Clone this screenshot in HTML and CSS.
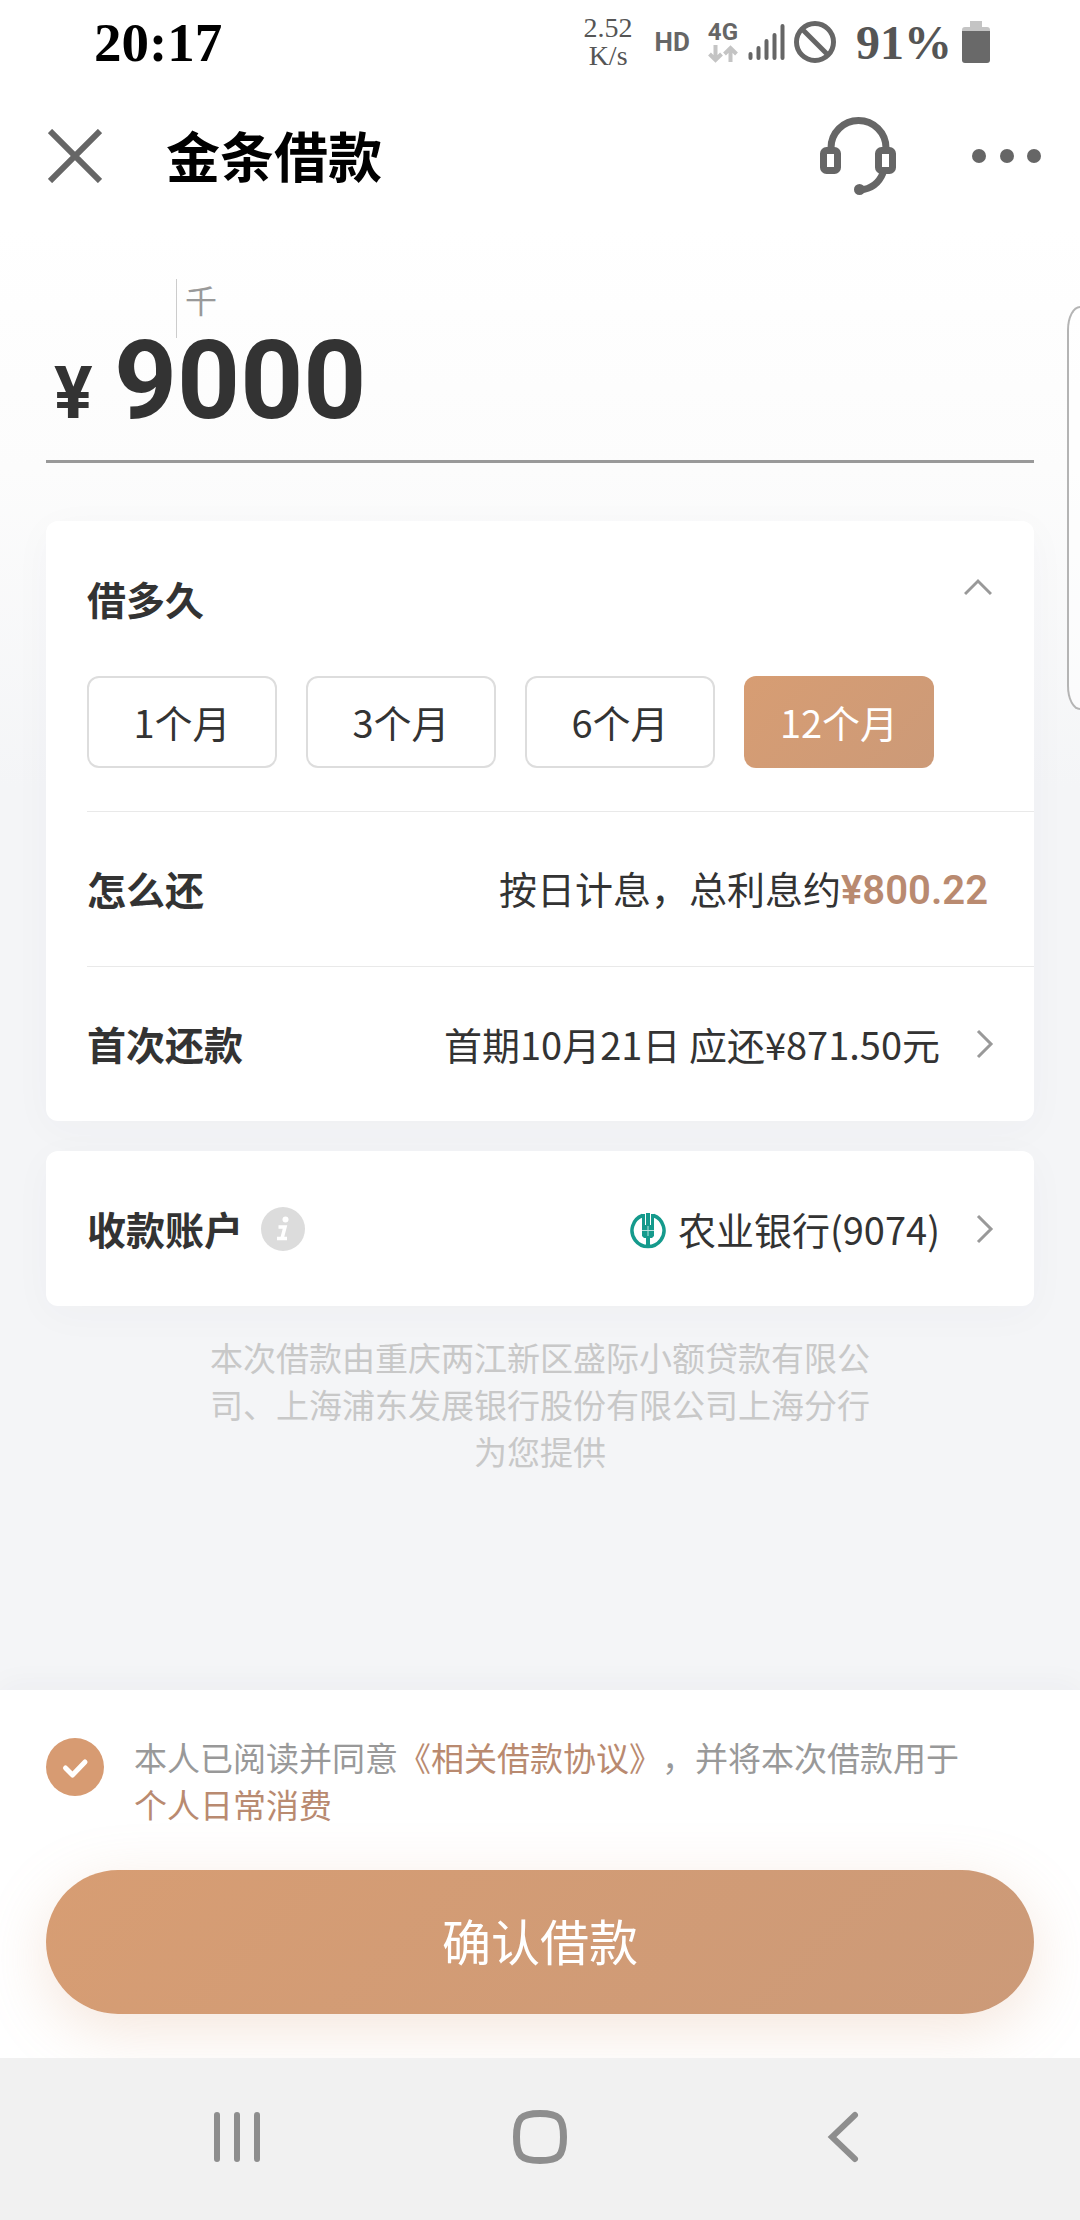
FILE: index.html
```html
<!DOCTYPE html>
<html lang="zh-CN">
<head>
<meta charset="utf-8">
<meta name="viewport" content="width=device-width, initial-scale=1">
<title>金条借款</title>
<link rel="stylesheet" href="styles.css">
</head>
<body>
<div class="status-bar">
  <time class="clock">20:17</time>
  <div class="indicators">
    <div class="speed"><span>2.52</span><span>K/s</span></div>
    <span class="hd">HD</span>
    <div class="network">
      <span>4G</span>
      <svg width="30" height="18" viewBox="0 0 30 18" fill="none" stroke="#c4c4c4" stroke-width="4"><path d="M7.500 0V15M1.500 9l6 6 6-6M22.500 17V3M16.500 9l6-6 6 6"/></svg>
    </div>
    <svg class="signal" width="38" height="38" viewBox="0 0 38 38" stroke="#666" stroke-width="4" stroke-linecap="round"><path d="M2.500 31v4M10.500 25v10M18.500 18v17M26.500 12v23M34.500 3v32"/></svg>
    <svg class="blocked" width="42" height="42" viewBox="0 0 42 42" fill="none" stroke="#666" stroke-width="5"><circle cx="21" cy="21" r="18.500"/><path d="M8 8l26 26"/></svg>
    <span class="percent">91%</span>
    <svg class="battery" width="28" height="42" viewBox="0 0 28 42"><path d="M8 0h12v6h5a3 3 0 0 1 3 3v2H0V9a3 3 0 0 1 3-3h5z" fill="#c4c4c4"/><path d="M0 10h28v29a3 3 0 0 1-3 3H3a3 3 0 0 1-3-3z" fill="#696969"/></svg>
  </div>
</div>

<header class="app-bar">
  <button class="icon-button" type="button" aria-label="关闭">
    <svg width="54" height="54" viewBox="0 0 54 54" stroke="#666" stroke-width="6"><path d="M2 2l50 50M52 2L2 52"/></svg>
  </button>
  <h1 class="title">金条借款</h1>
  <button class="icon-button" type="button" aria-label="客服">
    <svg width="76" height="78" viewBox="0 0 76 78" fill="none" stroke="#666"><path d="M11 32v-1a27 27 0 0 1 55 0v1" stroke-width="7"/><rect x="3.500" y="33.500" width="14" height="20" rx="3" stroke-width="7"/><rect x="58.500" y="33.500" width="14" height="20" rx="3" stroke-width="7"/><path d="M63 56C59 66 51 72 40 73" stroke-width="7"/><circle cx="39.500" cy="72.500" r="5.500" fill="#666" stroke="none"/></svg>
  </button>
  <button class="icon-button more" type="button" aria-label="更多">
    <svg width="70" height="14" viewBox="0 0 70 14" fill="#666"><circle cx="7" cy="7" r="7"/><circle cx="35" cy="7" r="7"/><circle cx="62" cy="7" r="7"/></svg>
  </button>
</header>

<main class="content">
  <section class="amount">
    <div class="unit">千</div>
    <div class="amount-line">
      <label class="currency" for="amount">¥</label>
      <input class="amount-input" id="amount" type="text" inputmode="numeric" value="9000">
    </div>
  </section>

  <section class="card">
    <div class="card-head">
      <h2 class="label">借多久</h2>
      <button class="icon-button collapse" type="button" aria-label="收起">
        <svg width="28" height="18" viewBox="0 0 28 18" fill="none" stroke="#999" stroke-width="3"><path d="M1 16L14 3l13 13"/></svg>
      </button>
    </div>
    <div class="terms">
      <button class="term" type="button">1个月</button>
      <button class="term" type="button">3个月</button>
      <button class="term" type="button">6个月</button>
      <button class="term selected" type="button" aria-pressed="true">12个月</button>
    </div>
    <div class="row">
      <h2 class="label">怎么还</h2>
      <p class="value">按日计息，总利息约<strong class="interest">¥800.22</strong></p>
    </div>
    <div class="row">
      <h2 class="label">首次还款</h2>
      <button class="value link" type="button">
        <span>首期10月21日 应还¥871.50元</span>
        <svg width="18" height="30" viewBox="0 0 18 30" fill="none" stroke="#999" stroke-width="3"><path d="M2 2l13 13L2 28"/></svg>
      </button>
    </div>
  </section>

  <section class="card">
    <div class="row">
      <h2 class="label">收款账户</h2>
      <button class="icon-button info" type="button" aria-label="说明">
        <svg width="44" height="44" viewBox="0 0 44 44"><circle cx="22" cy="22" r="22" fill="#dcdcdc"/><circle cx="24.500" cy="12.500" r="3" fill="#fff"/><path d="M17.500 20h6.500l-3 11.500M16 31.500h10" fill="none" stroke="#fff" stroke-width="3.500"/></svg>
      </button>
      <button class="value link" type="button">
        <svg class="bank" width="36" height="40" viewBox="0 -4 36 40"><g fill="none" stroke="#159a8c"><path d="M12.500 2.500a16 16 0 1 0 11 0" stroke-width="3.500"/><path d="M18 22v13" stroke-width="4"/></g><path d="M12 1h3v11h1V0h4v12h1V1h3v22l-2 2h-8l-2-2z" fill="#159a8c"/><path d="M12 17.500h12M18 13v10" stroke="#b9e2dd" stroke-width="1"/></svg>
        <span>农业银行(9074)</span>
        <svg width="18" height="30" viewBox="0 0 18 30" fill="none" stroke="#999" stroke-width="3"><path d="M2 2l13 13L2 28"/></svg>
      </button>
    </div>
  </section>

  <p class="provider">本次借款由重庆两江新区盛际小额贷款有限公司、上海浦东发展银行股份有限公司上海分行为您提供</p>
</main>

<footer class="confirm">
  <div class="agreement">
    <span class="check">
      <input class="check-box" id="agree" type="checkbox" checked>
      <svg class="check-mark" width="58" height="58" viewBox="0 0 58 58" fill="none" stroke="#fff" stroke-width="5" stroke-linecap="round" stroke-linejoin="round"><path d="M19.500 30l7 7L39 24"/></svg>
    </span>
    <p class="terms-text"><label for="agree">本人已阅读并同意</label><a href="#agreement">《相关借款协议》</a>，并将本次借款用于<br><a href="#purpose">个人日常消费</a></p>
  </div>
  <button class="submit" type="button">确认借款</button>
</footer>

<nav class="system-nav">
  <button class="icon-button" type="button" aria-label="最近任务">
    <svg width="60" height="54" viewBox="0 0 60 54" stroke="#8e8e8e" stroke-width="6" stroke-linecap="round"><path d="M10 5v44M30 5v44M50 5v44"/></svg>
  </button>
  <button class="icon-button" type="button" aria-label="主屏幕">
    <svg width="56" height="56" viewBox="0 0 56 56" fill="none" stroke="#8e8e8e" stroke-width="7"><path d="M28 4.500c19 0 23.500 4.500 23.500 23.500S47 51.500 28 51.500 4.500 47 4.500 28 9 4.500 28 4.500z"/></svg>
  </button>
  <button class="icon-button" type="button" aria-label="返回">
    <svg width="60" height="54" viewBox="0 0 60 54" fill="none" stroke="#8e8e8e" stroke-width="6" stroke-linecap="round"><path d="M42 5L19 27l23 22"/></svg>
  </button>
</nav>

<div class="edge-handle"></div>
</body>
</html>
```
FILE: styles.css
```css
* {
  box-sizing: border-box;
}

body {
  margin: 0;
  min-height: 100vh;
  display: flex;
  flex-direction: column;
  position: relative;
  overflow-x: hidden;
  background: #f4f5f7;
  color: #333;
  font-family: "Noto Sans CJK SC", sans-serif;
  font-size: 38px;
  text-spacing-trim: space-all;
}

button {
  margin: 0;
  padding: 0;
  border: 0;
  background: none;
  color: inherit;
  font: inherit;
}

h1,
h2,
p {
  margin: 0;
}

svg {
  display: block;
  flex: none;
}

.icon-button {
  display: flex;
  align-items: center;
  justify-content: center;
}

/* Status bar */
.status-bar {
  display: flex;
  align-items: center;
  justify-content: space-between;
  height: 84px;
  padding: 0 90px 0 94px;
  background: #fff;
  font-family: "Liberation Serif", serif;
}

.clock {
  color: #000;
  font-size: 55px;
  font-weight: bold;
}

.indicators {
  display: flex;
  align-items: center;
  color: #555;
}

.speed {
  display: flex;
  flex-direction: column;
  align-items: center;
  font-size: 28px;
  line-height: 28px;
}

.hd {
  margin: 0 18px 0 22px;
  color: #666;
  font: bold 26px Roboto, sans-serif;
}

.network {
  display: flex;
  flex-direction: column;
  align-items: center;
  gap: 2px;
  color: #666;
  font: bold 24px/22px Roboto, sans-serif;
}

.signal {
  margin-left: 10px;
}

.blocked {
  margin-left: 8px;
}

.percent {
  margin: 0 10px 0 20px;
  font-size: 48px;
  font-weight: bold;
}

/* App bar */
.app-bar {
  display: flex;
  align-items: center;
  height: 144px;
  padding: 0 38px 0 48px;
  background: #fff;
}

.title {
  flex: 1;
  margin-left: 64px;
  padding-bottom: 2px;
  color: #000;
  font-size: 54px;
  line-height: 64px;
}

.more {
  margin-left: 76px;
}

/* Content */
.content {
  flex: 1;
  padding: 51px 46px 48px;
  background: linear-gradient(#fff, #fcfcfc 240px, #f4f5f7 560px);
}

.amount {
  border-bottom: 3px solid #999;
  padding-bottom: 38px;
}

.unit {
  height: 59px;
  margin-left: 130px;
  padding-left: 8px;
  border-left: 1px solid #ccc;
  color: #999;
  font-size: 32px;
  line-height: 40px;
}

.amount-line {
  display: flex;
  align-items: baseline;
  height: 84px;
  padding-left: 8px;
  font-family: Roboto, sans-serif;
  font-weight: bold;
}

.currency {
  width: 60px;
  font-size: 72px;
  line-height: 84px;
}

.amount-input {
  flex: 1;
  min-width: 0;
  height: 84px;
  padding: 0;
  border: 0;
  outline: 0;
  background: none;
  color: inherit;
  font: inherit;
  font-size: 110px;
  line-height: 84px;
}

.card {
  margin-top: 30px;
  padding-left: 41px;
  border-radius: 12px;
  background: #fff;
  box-shadow: 0 8px 40px rgba(60, 60, 80, 0.03);
}

.amount + .card {
  margin-top: 58px;
}

.card-head {
  display: flex;
  align-items: center;
  justify-content: space-between;
  height: 155px;
  padding-right: 42px;
}

.collapse {
  margin-bottom: 24px;
}

.label {
  padding-bottom: 2px;
  font-size: 39px;
  line-height: 56px;
}

.terms {
  display: flex;
  flex-wrap: wrap;
  gap: 29px;
  padding-bottom: 43px;
}

.term {
  width: 190px;
  height: 92px;
  padding-bottom: 2px;
  border: 2px solid #ddd;
  border-radius: 12px;
}

.term.selected {
  border: 0;
  background: linear-gradient(135deg, #d79d73, #cc9a78);
  color: #fff;
}

.row {
  display: flex;
  align-items: center;
  min-height: 155px;
  padding-right: 40px;
}

.terms ~ .row {
  border-top: 1px solid #e9e9e9;
}

.value {
  margin-left: auto;
  padding-right: 6px;
  line-height: 56px;
}

.value.link {
  display: flex;
  align-items: center;
  gap: 36px;
  padding-right: 0;
}

.bank {
  margin-right: -24px;
}

.interest {
  color: #b98a70;
  font-family: Roboto, sans-serif;
  font-size: 40px;
  font-weight: 600;
}

.info {
  margin-left: 18px;
}

.provider {
  max-width: 676px;
  margin: 28px auto 0;
  padding: 0 8px;
  color: #c8c8c8;
  font-size: 33px;
  line-height: 47px;
  text-align: center;
}

/* Confirmation panel */
.confirm {
  padding: 44px 46px;
  background: #fff;
  box-shadow: 0 -4px 30px rgba(60, 60, 80, 0.04);
  overflow: hidden;
}

.agreement {
  display: flex;
  align-items: flex-start;
  gap: 30px;
}

.check {
  display: grid;
  margin-top: 4px;
}

.check-box {
  grid-area: 1 / 1;
  width: 58px;
  height: 58px;
  margin: 0;
  border-radius: 50%;
  background: #d79b72;
  appearance: none;
}

.check-mark {
  grid-area: 1 / 1;
  pointer-events: none;
}

.terms-text {
  color: #999;
  font-size: 33px;
  line-height: 47px;
}

.terms-text a {
  color: #b98a70;
  text-decoration: none;
}

.submit {
  width: 100%;
  height: 144px;
  margin-top: 42px;
  padding-bottom: 6px;
  border-radius: 72px;
  background: linear-gradient(135deg, #d79d73, #cc9a78);
  box-shadow: 0 16px 60px rgba(215, 155, 114, 0.25);
  color: #fff;
  font-size: 49px;
}

/* System navigation */
.system-nav {
  display: flex;
  align-items: center;
  justify-content: space-around;
  height: 162px;
  padding: 0 85px 4px;
  background: #f1f1f1;
}

/* Edge panel handle floating over the page */
.edge-handle {
  position: absolute;
  top: 306px;
  right: 0;
  width: 13px;
  height: 404px;
  border: 2px solid #b4b4b4;
  border-right: 0;
  border-radius: 13px 0 0 13px / 24px 0 0 24px;
  background: rgba(255, 255, 255, 0.5);
}
```
